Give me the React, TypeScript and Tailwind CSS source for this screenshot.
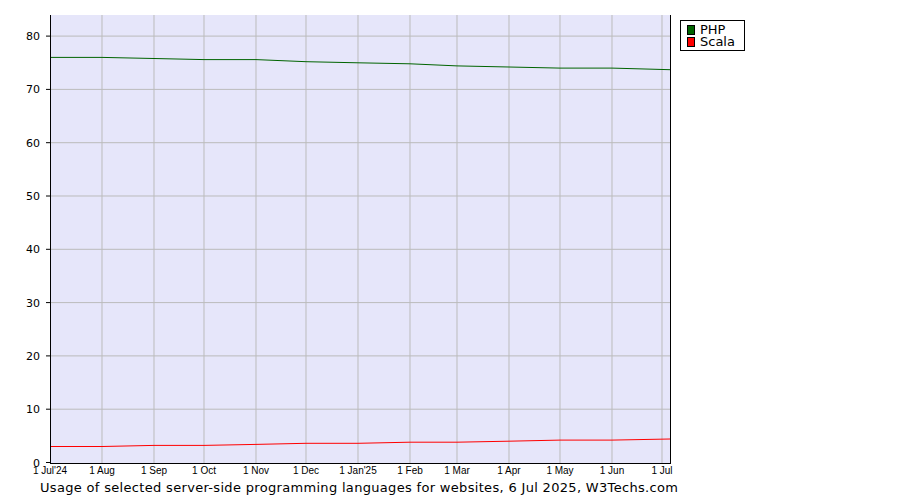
import React from 'react';

const months = [
    {label: "1 Jul'24", x: 50}, {label: '1 Aug', x: 102}, {label: '1 Sep', x: 154},
    {label: '1 Oct', x: 204}, {label: '1 Nov', x: 256}, {label: '1 Dec', x: 306},
    {label: "1 Jan'25", x: 358}, {label: '1 Feb', x: 410}, {label: '1 Mar', x: 457},
    {label: '1 Apr', x: 509}, {label: '1 May', x: 560}, {label: '1 Jun', x: 612},
    {label: '1 Jul', x: 662},
];
const php = [76, 76, 75.8, 75.6, 75.6, 75.2, 75.0, 74.8, 74.4, 74.2, 74.0, 74.0, 73.7];
const scala = [3.0, 3.0, 3.2, 3.2, 3.4, 3.6, 3.6, 3.8, 3.8, 4.0, 4.2, 4.2, 4.4];

const y = (v: number) => 462.5 - v * 5.33;
const xs = [...months.slice(0, 12).map(m => m.x), 670];
const line = (vals: number[]) => vals.map((v, i) => `${xs[i]},${y(v).toFixed(1)}`).join(' ');

const App = () => {
    return (
        <div className="w-[900px] h-[500px] bg-white" style={{fontFamily: '"DejaVu Sans", Verdana, sans-serif'}}>
            <div className="flex">
                <svg width="680" height="478" className="shrink-0">
                    <rect x="50" y="15" width="620" height="448" fill="#e6e6fa"/>
                    {[10, 20, 30, 40, 50, 60, 70, 80].map(v => (
                        <line key={v} x1="50" x2="670" y1={y(v)} y2={y(v)} stroke="#bbbbbb"/>
                    ))}
                    {months.slice(1).map(m => (
                        <line key={m.label} x1={m.x} x2={m.x} y1="15" y2="463" stroke="#bbbbbb"/>
                    ))}
                    <polyline points={line(php)} fill="none" stroke="#006400" strokeWidth="1"/>
                    <polyline points={line(scala)} fill="none" stroke="#ff0000" strokeWidth="1"/>
                    <line x1="50.5" x2="50.5" y1="15" y2="463" stroke="#000"/>
                    <line x1="670.5" x2="670.5" y1="15" y2="463" stroke="#000"/>
                    <line x1="50" x2="671" y1="463.5" y2="463.5" stroke="#000"/>
                    {[0, 10, 20, 30, 40, 50, 60, 70, 80].map(v => (
                        <g key={v}>
                            <line x1="46" x2="50" y1={y(v)} y2={y(v)} stroke="#000"/>
                            <text x="40" y={y(v) + 4} textAnchor="end" fontSize="11" fill="#000">{v}</text>
                        </g>
                    ))}
                    {months.map(m => (
                        <text key={m.label} x={m.x} y="474" textAnchor="middle" fontSize="10" fill="#000"
                              fontFamily='"Liberation Sans", Arial, sans-serif'>{m.label}</text>
                    ))}
                </svg>
                <div className="mt-[20px] w-[65px] h-[31px] border border-black pl-[6px] pt-[3px] text-[13px] leading-[12px] text-black">
                    <div className="flex items-center gap-[5px]">
                        <span className="w-[8px] h-[10px] bg-[#006400] border border-black"/>PHP
                    </div>
                    <div className="flex items-center gap-[5px]">
                        <span className="w-[8px] h-[10px] bg-[#ff0000] border border-black"/>Scala
                    </div>
                </div>
            </div>
            <p className="pl-[40px] mt-[2px] text-[13px] tracking-[0.32px] leading-[16px] text-black">
                Usage of selected server-side programming languages for websites, 6 Jul 2025, W3Techs.com
            </p>
        </div>
    );
};

export default App;
